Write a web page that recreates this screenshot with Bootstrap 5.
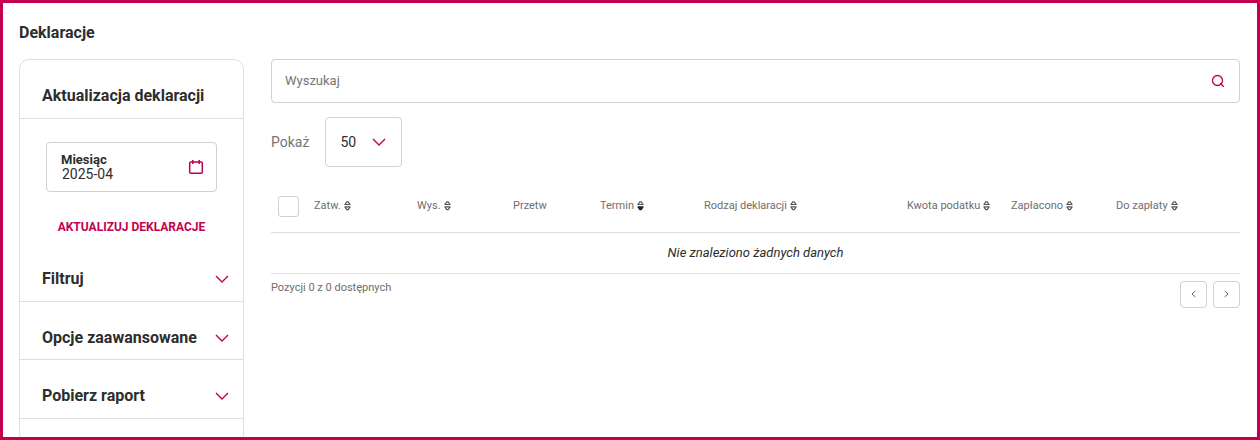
<!DOCTYPE html>
<html lang="pl">
<head>
<meta charset="utf-8">
<meta name="viewport" content="width=device-width, initial-scale=1">
<title>Deklaracje</title>
<link href="https://cdn.jsdelivr.net/npm/bootstrap@5.3.0/dist/css/bootstrap.min.css" rel="stylesheet">
<style>
:root { --brand: #c3004f; --ink: #2d2d2d; --muted: #6e6e6e; --line: #dedede; --field: #d0d0d0; }
body { font-family: Roboto, "Noto Sans", sans-serif; color: var(--ink); background: #fff; }
svg { display: block; flex: none; }
.page-frame { border: 3px solid var(--brand); padding: 20px 17px 0 16px; }
.page-title { font-size: 16px; line-height: 20px; margin-bottom: 16px; }
.columns { gap: 27px; }
.side-panel { width: 225px; flex: none; border: 1px solid var(--line); border-radius: 10px; }
.side-head { font-size: 16px; line-height: 20px; padding: 26px 14px 12px 22px; border-bottom: 1px solid var(--line); }
.side-toggle { font-size: 16px; line-height: 20px; height: 58px; padding: 26px 14px 12px 22px; border: 0; border-bottom: 1px solid var(--line); background: none; color: inherit; }
.side-toggle.tall { height: 59px; }
.update-form { padding: 23px 26px 5px; }
.month-field { height: 50px; padding: 0 12px 0 14px; border: 1px solid var(--field); border-radius: 4px; }
.month-field label { font-size: 13px; line-height: 14px; }
.month-field input { font-size: 14px; line-height: 15px; height: 15px; padding: 0 1px; border: 0; background: none; color: var(--ink); min-width: 0; }
.update-button { font-size: 12px; line-height: 16px; margin-top: 27px; padding: 0; border: 0; background: none; color: var(--brand); }
.search-box { height: 44px; padding: 0 14px 0 13px; border: 1px solid var(--field); border-radius: 4px; }
.search-box input { font-size: 13px; border: 0; padding: 0; color: var(--ink); min-width: 0; }
.search-box input::placeholder { color: #757575; opacity: 1; }
.search-box button { border: 0; background: none; padding: 0; }
.page-size { margin-top: 14px; gap: 16px; font-size: 14px; }
.page-size label { color: #757575; }
.size-field { width: 77px; }
.size-field select { height: 50px; width: 100%; appearance: none; border: 1px solid var(--field); border-radius: 4px; background: #fff; color: var(--ink); padding: 0 14px; }
.size-field svg { position: absolute; right: 16px; top: 21px; pointer-events: none; }
.data-table { table-layout: fixed; width: 100%; margin-top: 13px; }
.data-table th { height: 52px; padding: 1px 0 0; vertical-align: middle; border-bottom: 1px solid var(--line); font-size: 11px; line-height: 14px; font-weight: 400; color: var(--muted); white-space: nowrap; }
.data-table th button { border: 0; padding: 0; background: none; color: inherit; gap: 3px; }
.data-table td { height: 41px; padding: 0; border-bottom: 1px solid var(--line); font-size: 13px; text-align: center; font-style: italic; }
.data-table input { appearance: none; display: block; width: 21px; height: 21px; margin: 0 0 0 7px; border: 1px solid var(--field); border-radius: 3px; }
.c-check { width: 43px; } .c-zatw { width: 103px; } .c-wys { width: 96px; } .c-przetw { width: 87px; }
.c-termin { width: 104px; } .c-kwota { width: 104px; } .c-zapl { width: 105px; } .c-doz { width: 124px; }
.table-foot { padding-top: 7px; font-size: 11px; line-height: 14px; color: var(--muted); }
.pager { gap: 6px; }
.pager button { width: 27px; height: 27px; padding: 0; border: 1px solid var(--field); border-radius: 4px; background: #fff; }
</style>
</head>
<body>
<svg class="d-none" aria-hidden="true">
  <symbol id="chevron" viewBox="0 0 14 8"><path d="M1 1l6 6 6-6" fill="none" stroke="#c3004f" stroke-width="1.4"/></symbol>
  <symbol id="sort" viewBox="0 0 7 10"><path d="M.9 3.500h5.200L4.200.8H2.800zM.9 5.900h5.200L4.200 8.600H2.800z" fill="none" stroke="#555" stroke-width="1.200" stroke-linejoin="round"/></symbol>
  <symbol id="sort-down" viewBox="0 0 7 10"><path d="M.9 3.500h5.200L4.200.8H2.800z" fill="none" stroke="#555" stroke-width="1.200" stroke-linejoin="round"/><path d="M.9 5.900h5.200L4.200 8.600H2.800z" fill="#222" stroke="#222" stroke-width="1.200" stroke-linejoin="round"/></symbol>
</svg>
<div class="page-frame vh-100 overflow-hidden">
  <h1 class="page-title fw-bold">Deklaracje</h1>
  <div class="columns d-flex align-items-start">
    <aside class="side-panel">
      <h2 class="side-head fw-bold mb-0">Aktualizacja deklaracji</h2>
      <form class="update-form text-center">
        <div class="month-field d-flex align-items-center text-start">
          <div class="d-flex flex-column flex-grow-1 overflow-hidden">
            <label for="month" class="fw-bold">Miesiąc</label>
            <input id="month" type="text" value="2025-04">
          </div>
          <svg width="16" height="16" viewBox="0 0 16 16" fill="none" stroke="#c3004f"><rect x="1.700" y="3" width="12.600" height="11.300" rx="1" stroke-width="1.500"/><path d="M4.800 1v4M11.200 1v4" stroke-width="1.500"/></svg>
        </div>
        <button type="button" class="update-button fw-bold">AKTUALIZUJ DEKLARACJE</button>
      </form>
      <button type="button" class="side-toggle tall fw-bold w-100 d-flex align-items-center justify-content-between">Filtruj <svg width="14" height="8"><use href="#chevron"/></svg></button>
      <button type="button" class="side-toggle fw-bold w-100 d-flex align-items-center justify-content-between">Opcje zaawansowane <svg width="14" height="8"><use href="#chevron"/></svg></button>
      <button type="button" class="side-toggle tall fw-bold w-100 d-flex align-items-center justify-content-between">Pobierz raport <svg width="14" height="8"><use href="#chevron"/></svg></button>
      <div class="pt-3 pb-2"></div>
    </aside>
    <main class="flex-grow-1">
      <div class="search-box d-flex align-items-center">
        <input type="search" class="flex-grow-1" placeholder="Wyszukaj" aria-label="Wyszukaj">
        <button type="button" aria-label="Szukaj"><svg width="14" height="14" viewBox="0 0 14 14" fill="none" stroke="#c3004f" stroke-width="1.300"><circle cx="6.500" cy="6.500" r="5"/><path d="M9.300 9.300l3.500 3.500"/></svg></button>
      </div>
      <div class="page-size d-flex align-items-center">
        <label for="size">Pokaż</label>
        <div class="size-field position-relative">
          <select id="size"><option>50</option></select>
          <svg width="14" height="8"><use href="#chevron"/></svg>
        </div>
      </div>
      <table class="data-table">
        <colgroup><col class="c-check"><col class="c-zatw"><col class="c-wys"><col class="c-przetw"><col class="c-termin"><col><col class="c-kwota"><col class="c-zapl"><col class="c-doz"></colgroup>
        <thead>
          <tr>
            <th><input type="checkbox" aria-label="Zaznacz wszystkie"></th>
            <th><button type="button" class="d-flex align-items-center">Zatw. <svg width="7" height="10"><use href="#sort"/></svg></button></th>
            <th><button type="button" class="d-flex align-items-center">Wys. <svg width="7" height="10"><use href="#sort"/></svg></button></th>
            <th>Przetw</th>
            <th><button type="button" class="d-flex align-items-center">Termin <svg width="7" height="10"><use href="#sort-down"/></svg></button></th>
            <th><button type="button" class="d-flex align-items-center">Rodzaj deklaracji <svg width="7" height="10"><use href="#sort"/></svg></button></th>
            <th><button type="button" class="d-flex align-items-center">Kwota podatku <svg width="7" height="10"><use href="#sort"/></svg></button></th>
            <th><button type="button" class="d-flex align-items-center">Zapłacono <svg width="7" height="10"><use href="#sort"/></svg></button></th>
            <th><button type="button" class="d-flex align-items-center">Do zapłaty <svg width="7" height="10"><use href="#sort"/></svg></button></th>
          </tr>
        </thead>
        <tbody><tr><td colspan="9">Nie znaleziono żadnych danych</td></tr></tbody>
      </table>
      <div class="table-foot d-flex justify-content-between align-items-start">
        <span>Pozycji 0 z 0 dostępnych</span>
        <nav class="pager d-flex" aria-label="Strony">
          <button type="button" class="d-flex align-items-center justify-content-center" aria-label="Poprzednia"><svg width="5" height="8" viewBox="0 0 5 8" fill="none" stroke="#666"><path d="M4.300 1L1 4l3.300 3"/></svg></button>
          <button type="button" class="d-flex align-items-center justify-content-center" aria-label="Następna"><svg width="5" height="8" viewBox="0 0 5 8" fill="none" stroke="#666"><path d="M.7 1L4 4 .7 7"/></svg></button>
        </nav>
      </div>
    </main>
  </div>
</div>
<script src="https://cdn.jsdelivr.net/npm/bootstrap@5.3.0/dist/js/bootstrap.bundle.min.js"></script>
</body>
</html>
